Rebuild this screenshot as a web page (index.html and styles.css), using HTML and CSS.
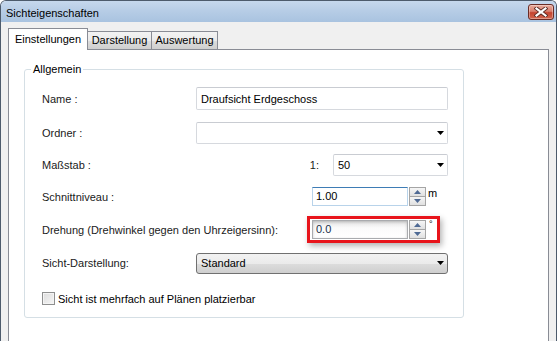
FILE: index.html
```html
<!DOCTYPE html>
<html lang="de">
<head>
<meta charset="UTF-8" />
<meta name="viewport" content="width=device-width, initial-scale=1" />
<title>Sichteigenschaften</title>
<link rel="stylesheet" href="styles.css">
</head>
<body>

<div class="window">
  <!-- Title bar -->
  <div class="titlebar">
    <span class="title">Sichteigenschaften</span>
    <button class="close-btn" aria-label="Schließen">
      <svg width="14" height="10" viewBox="0 0 14 10" aria-hidden="true">
        <path d="M2.5 1.5 L11.5 8.5 M11.5 1.5 L2.5 8.5" stroke="#5a2a24" stroke-width="4" stroke-linecap="square" />
        <path d="M2.5 1.5 L11.5 8.5 M11.5 1.5 L2.5 8.5" stroke="#fff" stroke-width="2.2" stroke-linecap="square" />
      </svg>
    </button>
  </div>

  <div class="window-body">
    <!-- Tabs -->
    <div class="tabs">
      <div class="tab tab-einst active">Einstellungen</div>
      <div class="tab tab-darst">Darstellung</div>
      <div class="tab tab-ausw">Auswertung</div>
    </div>

    <div class="tab-panel">
      <fieldset class="group">
        <legend>Allgemein</legend>

        <div class="row row-1">
          <span class="label">Name :</span>
          <div class="field">
            <div class="textbox">Draufsicht Erdgeschoss</div>
          </div>
        </div>

        <div class="row row-2">
          <span class="label">Ordner :</span>
          <div class="field">
            <div class="textbox combo">
              <span></span>
              <svg class="arrow" width="7" height="4" viewBox="0 0 7 4"><polygon points="0,0 7,0 3.5,4" fill="#000" /></svg>
            </div>
          </div>
        </div>

        <div class="row row-3">
          <span class="label">Maßstab :</span>
          <div class="field field-end">
            <span class="scale-prefix">1:</span>
            <div class="textbox combo scale-combo">
              <span>50</span>
              <svg class="arrow" width="7" height="4" viewBox="0 0 7 4"><polygon points="0,0 7,0 3.5,4" fill="#000" /></svg>
            </div>
          </div>
        </div>

        <div class="row row-4">
          <span class="label">Schnittniveau :</span>
          <div class="field field-spin">
            <div class="spin-group">
              <div class="spinner focused">
                <div class="spin-text">1.00</div>
                <div class="spin-buttons">
                  <span class="spin-btn"><svg width="7" height="4" viewBox="0 0 7 4"><polygon points="0,4 7,4 3.5,0" fill="#4f6a94" /></svg></span>
                  <span class="spin-btn"><svg width="7" height="4" viewBox="0 0 7 4"><polygon points="0,0 7,0 3.5,4" fill="#4f6a94" /></svg></span>
                </div>
              </div>
              <span class="unit">m</span>
            </div>
          </div>
        </div>

        <div class="row row-5">
          <span class="label">Drehung (Drehwinkel gegen den Uhrzeigersinn):</span>
          <div class="field field-spin">
            <div class="spin-group highlight">
              <div class="spinner shaded">
                <div class="spin-text">0.0</div>
                <div class="spin-buttons">
                  <span class="spin-btn"><svg width="7" height="4" viewBox="0 0 7 4"><polygon points="0,4 7,4 3.5,0" fill="#4f6a94" /></svg></span>
                  <span class="spin-btn"><svg width="7" height="4" viewBox="0 0 7 4"><polygon points="0,0 7,0 3.5,4" fill="#4f6a94" /></svg></span>
                </div>
              </div>
              <span class="unit unit-deg">°</span>
            </div>
          </div>
        </div>

        <div class="row row-6">
          <span class="label">Sicht-Darstellung:</span>
          <div class="field">
            <div class="dropdown">
              <span>Standard</span>
              <svg class="arrow" width="7" height="4" viewBox="0 0 7 4"><polygon points="0,0 7,0 3.5,4" fill="#000" /></svg>
            </div>
          </div>
        </div>

        <div class="row row-7">
          <label class="check">
            <span class="checkbox"></span>
            Sicht ist mehrfach auf Plänen platzierbar
          </label>
        </div>
      </fieldset>
    </div>
  </div>
</div>

</body>
</html>
```

FILE: styles.css
```css
/* Reset */
* {
  box-sizing: border-box;
}
body {
  margin: 0;
  background: #fff;
  font-family: 'Liberation Sans', Arial, sans-serif;
  font-size: 11px;
  color: #1a1a1a;
  overflow: hidden;
}

/* Window frame */
.window {
  width: 557px;
  height: 341px;
  display: flex;
  flex-direction: column;
  border: 1px solid #4d5b6c;
  border-bottom: none;
  border-radius: 6px 6px 0 0;
  background: #f0f0f0;
  overflow: hidden;
}

.titlebar {
  height: 21px;
  flex-shrink: 0;
  display: flex;
  justify-content: space-between;
  align-items: flex-start;
  padding: 0 2px 0 5px;
  background: linear-gradient(#c6d8ed, #b7cde6 45%, #a9c3e0);
}
.title {
  margin-top: 5px;
  line-height: 14px;
  color: #000;
}
.close-btn {
  margin-top: 3px;
  width: 26px;
  height: 16px;
  padding: 0;
  display: flex;
  align-items: center;
  justify-content: center;
  border: 1px solid #6a2c26;
  border-radius: 3px;
  background: linear-gradient(#e9ab9c, #d8806f 45%, #c4432f 55%, #d2674f);
  box-shadow: inset 0 0 0 1px rgba(255, 255, 255, 0.35);
}

.window-body {
  flex-grow: 1;
  display: flex;
  flex-direction: column;
  padding: 6px 7px 0 7px;
}

/* Tabs */
.tabs {
  display: flex;
  align-items: flex-end;
  height: 21px;
  flex-shrink: 0;
}
.tab {
  height: 18px;
  line-height: 16px;
  text-align: center;
  border: 1px solid #898c95;
  border-bottom: none;
  margin-left: -1px;
  background: linear-gradient(#f3f3f3, #ebebeb 50%, #dddddd 51%, #cfcfcf);
  color: #000;
}
.tab.active {
  position: relative;
  z-index: 1;
  height: 22px;
  line-height: 20px;
  margin-left: 0;
  margin-bottom: -1px;
  background: #fff;
}
.tab-einst {
  width: 80px;
}
.tab-darst {
  width: 65px;
}
.tab-ausw {
  width: 67px;
}

.tab-panel {
  flex-grow: 1;
  background: #fff;
  border: 1px solid #898c95;
  border-bottom: none;
  padding: 0 0 0 15px;
}

/* Group box */
.group {
  width: 440px;
  margin: 12px 0 0 0;
  padding: 5px 0 0 0;
  border: 1px solid #d5dfe5;
  border-radius: 3px;
}
.group legend {
  margin-left: 6px;
  padding: 0 2px;
  line-height: 14px;
  color: #000;
}

.row {
  display: flex;
  align-items: center;
  padding-left: 17px;
}
.row-1 { height: 35px; }
.row-2 { height: 34px; }
.row-3 { height: 30px; }
.row-4 { height: 33px; }
.row-5 { height: 33px; }
.row-6 { height: 34px; }
.row-7 { height: 37px; }

.label {
  width: 154px;
  flex-shrink: 0;
  white-space: nowrap;
}
.field {
  width: 252px;
  display: flex;
  align-items: center;
}
.field-end {
  justify-content: flex-end;
}
.field-spin {
  padding-left: 111px;
}

/* Text boxes and combos */
.textbox {
  width: 252px;
  height: 23px;
  display: flex;
  align-items: center;
  justify-content: space-between;
  padding: 0 3px 0 4px;
  border: 1px solid #d6d9de;
  border-top-color: #c9ccd2;
  border-radius: 2px;
  background: #fff;
  color: #000;
}
.combo {
  height: 22px;
}
.scale-prefix {
  margin-right: 14px;
}
.scale-combo {
  width: 115px;
}
.arrow {
  flex-shrink: 0;
}

/* Spinner */
.spin-group {
  display: flex;
  align-items: flex-start;
  padding: 1px 2px;
  border: 3px solid transparent;
}
.spin-group.highlight {
  border-color: #e8141b;
  box-shadow: 2px 3px 6px rgba(0, 0, 0, 0.3);
}
.spinner {
  width: 114px;
  height: 19px;
  display: flex;
}
.spin-text {
  flex-grow: 1;
  padding-left: 3px;
  line-height: 17px;
  border: 1px solid #b8d3ea;
  background: #fff;
  color: #000;
}
.spinner.focused .spin-text {
  border-top-color: #3e7cb5;
}
.spinner.shaded .spin-text {
  border-color: #a9abae;
  background: linear-gradient(#e2e2e2, #fafafa 40%, #fff);
  box-shadow: inset 0 1px 3px rgba(0, 0, 0, 0.2);
  color: #20304a;
}
.spin-buttons {
  width: 17px;
  display: flex;
  flex-direction: column;
  margin-left: 1px;
}
.spin-btn {
  flex: 1;
  display: flex;
  align-items: center;
  justify-content: center;
  border: 1px solid #a5a5a5;
  background: linear-gradient(#f6f6f6, #e0e0e0);
}
.spin-btn + .spin-btn {
  border-top: none;
}
.unit {
  width: 6px;
  margin-left: 2px;
  line-height: 12px;
  white-space: nowrap;
  color: #000;
}
.unit-deg {
  margin-left: 3px;
  font-size: 9px;
  line-height: 8px;
}

/* Drop-down list */
.dropdown {
  width: 252px;
  height: 21px;
  display: flex;
  align-items: center;
  justify-content: space-between;
  padding: 0 3px 0 4px;
  border: 1px solid #707070;
  border-radius: 3px;
  background: linear-gradient(#f2f2f2, #ebebeb 50%, #dddddd 51%, #cfcfcf);
  color: #000;
}

/* Checkbox */
.check {
  display: flex;
  align-items: center;
  gap: 3px;
  color: #000;
}
.checkbox {
  width: 13px;
  height: 13px;
  border: 1px solid #8e8f8f;
  background: linear-gradient(135deg, #dcdcdc, #f6f6f6);
  box-shadow: inset 0 0 0 1px #f4f4f4;
}
```
